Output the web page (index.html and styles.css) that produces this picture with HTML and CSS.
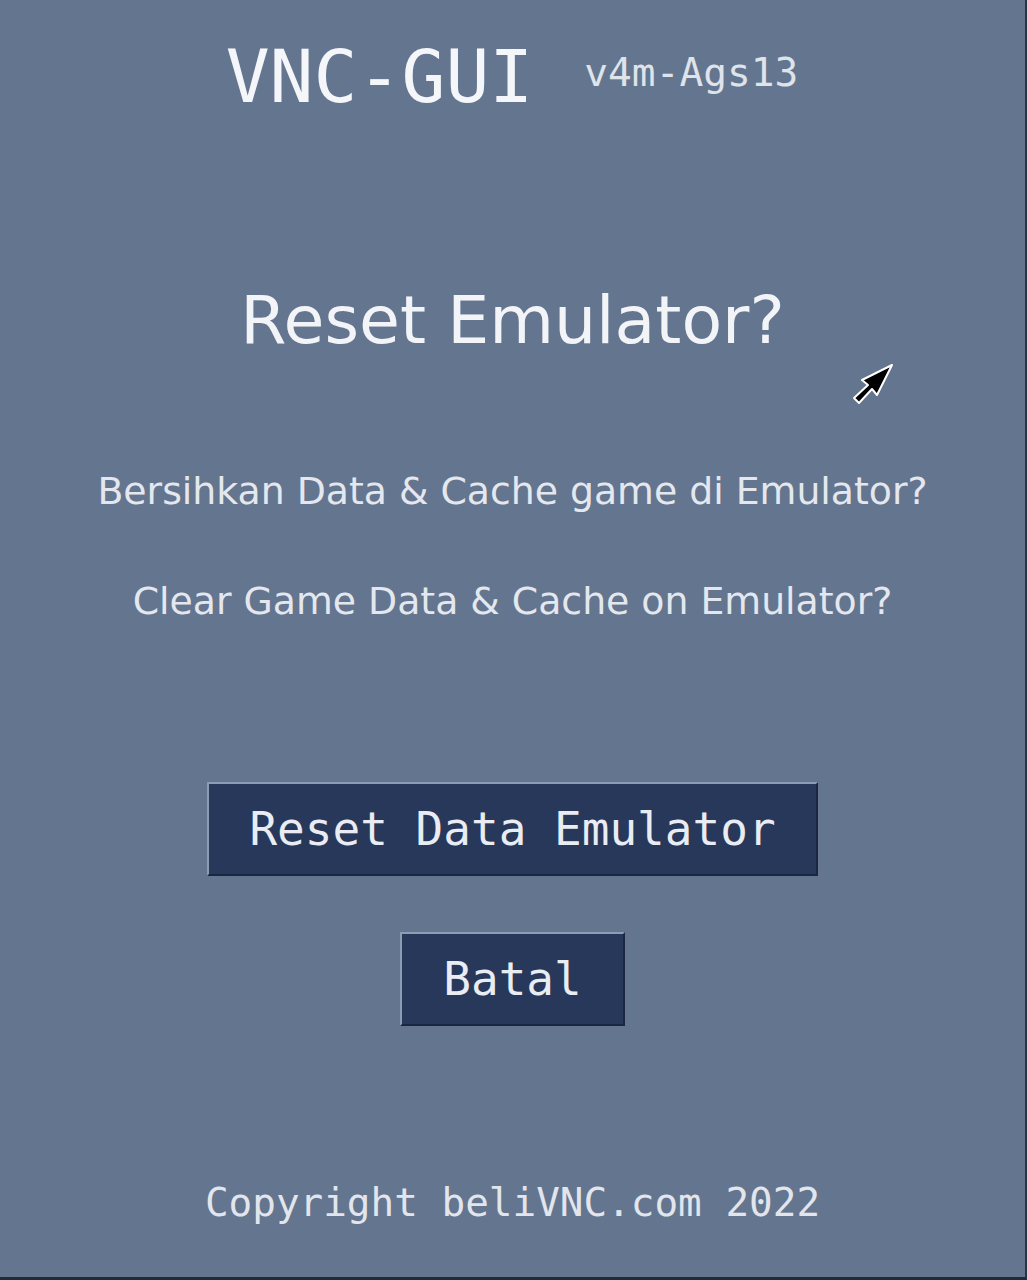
FILE: index.html
```html
<!DOCTYPE html>
<html lang="id">
<head>
<meta charset="utf-8">
<title>VNC-GUI</title>
<link rel="stylesheet" href="styles.css">
</head>
<body>
<div class="screen">
  <header class="header">
    <h1 class="title">VNC-GUI</h1>
    <span class="version">v4m-Ags13</span>
  </header>
  <h2 class="heading">Reset Emulator?</h2>
  <p class="msg msg-id">Bersihkan Data &amp; Cache game di Emulator?</p>
  <p class="msg msg-en">Clear Game Data &amp; Cache on Emulator?</p>
  <button class="btn btn-reset" type="button">Reset Data Emulator</button>
  <button class="btn btn-cancel" type="button">Batal</button>
  <footer class="footer">Copyright beliVNC.com 2022</footer>
  <svg class="cursor" width="44" height="44" viewBox="0 0 44 44" aria-hidden="true">
    <polygon points="42,2 12,17 18,22 4,35 9,40 22,26 27,32" fill="#000" stroke="#fff" stroke-width="2" stroke-linejoin="round"/>
  </svg>
</div>
</body>
</html>
```
FILE: styles.css
```css
html, body {
  margin: 0;
  padding: 0;
}
body {
  background: #64758f;
}
.screen {
  position: relative;
  box-sizing: border-box;
  width: 1027px;
  height: 1280px;
  background: #64758f;
  border-right: 2px solid #2a3346;
  border-bottom: 3px solid #222a3a;
  display: flex;
  flex-direction: column;
  align-items: center;
  overflow: hidden;
}
.header {
  display: flex;
  align-items: flex-start;
  gap: 51px;
  margin-top: 40px;
  padding-right: 1px;
}
.title {
  margin: 0;
  font-family: "DejaVu Sans Mono", monospace;
  font-weight: normal;
  font-size: 73px;
  line-height: 1;
  color: #f4f6fa;
}
.version {
  margin-top: 13px;
  font-family: "DejaVu Sans Mono", monospace;
  font-size: 39.5px;
  line-height: 1;
  color: #dfe3ea;
}
.heading {
  margin: 174px 0 0;
  font-family: "DejaVu Sans", sans-serif;
  font-weight: normal;
  font-size: 66.5px;
  line-height: 1;
  color: #f2f4f8;
}
.msg {
  margin: 0;
  font-family: "DejaVu Sans", sans-serif;
  font-size: 37.8px;
  line-height: 1;
  color: #e4e8ee;
}
.msg-id {
  margin-top: 119px;
}
.msg-en {
  margin-top: 73px;
}
.btn {
  box-sizing: border-box;
  height: 94px;
  margin: 0;
  padding: 0 40px;
  font-family: "DejaVu Sans Mono", monospace;
  font-size: 46px;
  line-height: 1;
  color: #e9ecf2;
  background: #27385a;
  border: 2px solid;
  border-color: #8e9cb3 #1b2640 #1b2640 #8e9cb3;
  border-radius: 0;
}
.btn-reset {
  width: 611px;
  margin-top: 161px;
}
.btn-cancel {
  width: 225px;
  margin-top: 56px;
}
.footer {
  margin-top: 157px;
  font-family: "DejaVu Sans Mono", monospace;
  font-size: 39.3px;
  line-height: 1;
  color: #e2e6ec;
}
.cursor {
  position: absolute;
  left: 850px;
  top: 363px;
}
```
